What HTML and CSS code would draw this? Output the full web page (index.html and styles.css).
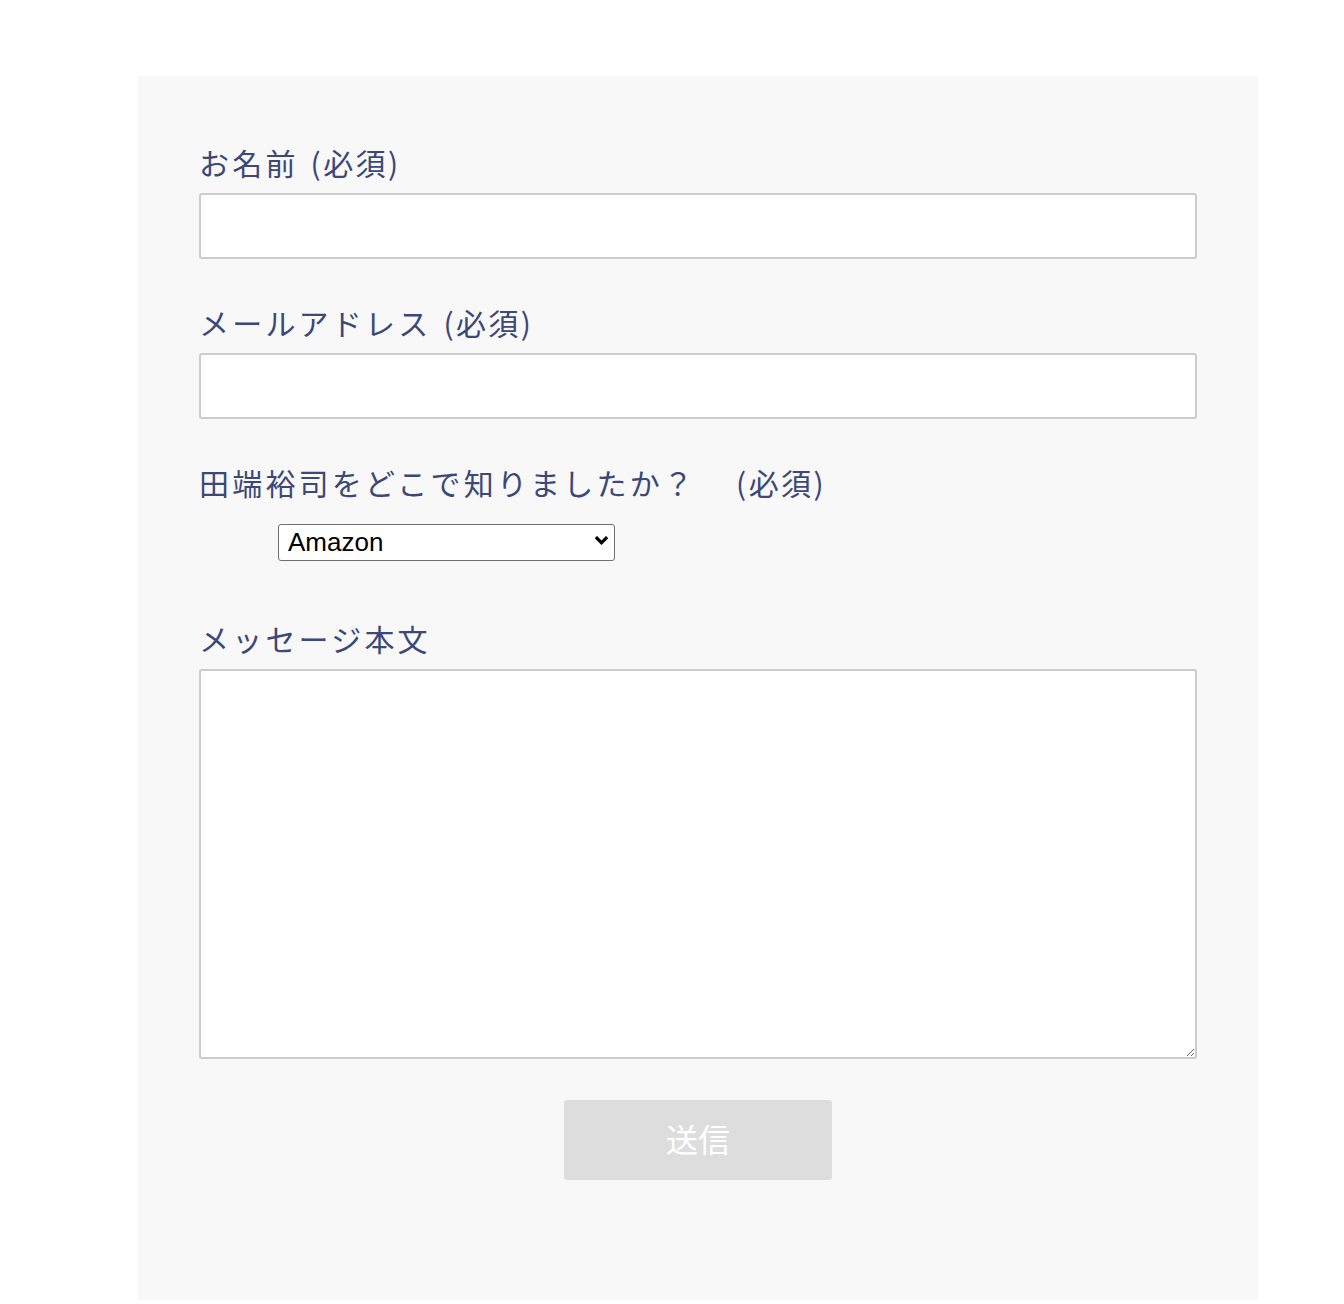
FILE: index.html
```html
<!DOCTYPE html>
<html lang="ja">
<head>
<meta charset="utf-8">
<title>お問い合わせ</title>
<link rel="stylesheet" href="styles.css">
</head>
<body>
<main class="page">
  <form class="contact">
    <div class="field">
      <label class="label" for="name">お名前<span class="req">(必須)</span></label>
      <input class="text-input" id="name" type="text">
    </div>
    <div class="field">
      <label class="label" for="email">メールアドレス<span class="req">(必須)</span></label>
      <input class="text-input" id="email" type="email">
    </div>
    <div class="field field-select">
      <label class="label" for="source">田端裕司をどこで知りましたか？<span class="req req-wide">(必須)</span></label>
      <div class="select-wrap">
        <select class="select" id="source">
          <option>Amazon</option>
          <option>書店</option>
          <option>SNS</option>
          <option>その他</option>
        </select>
        <svg class="chevron" width="13" height="11" viewBox="0 0 13 11" aria-hidden="true">
          <path d="M2 2.2 L6.5 6.8 L11 2.2" fill="none" stroke="#000" stroke-width="3.2" stroke-linecap="square" stroke-linejoin="miter"/>
        </svg>
      </div>
    </div>
    <div class="field field-last">
      <label class="label" for="message">メッセージ本文</label>
      <textarea class="textarea" id="message"></textarea>
    </div>
    <div class="actions">
      <button class="submit" type="button">送信</button>
    </div>
  </form>
</main>
</body>
</html>
```

FILE: styles.css
```css
html, body {
  margin: 0;
  padding: 0;
  background: #ffffff;
}

.page {
  padding: 76px 0 0 138px;
}

.contact {
  width: 1120px;
  box-sizing: border-box;
  background: #f8f8f8;
  padding: 71px 61px 120px 61px;
  font-family: "Noto Sans CJK JP", "Noto Sans", sans-serif;
}

.field {
  margin-bottom: 48px;
}

.field-select {
  margin-bottom: 62px;
}

.field-last {
  margin-bottom: 41px;
}

.label {
  display: block;
  font-size: 30px;
  line-height: 30px;
  letter-spacing: 3.2px;
  color: #3b4878;
  margin-bottom: 16px;
  white-space: nowrap;
}

.req {
  margin-left: 12px;
  letter-spacing: 2.4px;
}

.req-wide {
  margin-left: 40px;
}

.text-input {
  display: block;
  width: 100%;
  height: 66px;
  box-sizing: border-box;
  border: 2px solid #cccccc;
  border-radius: 3px;
  background: #ffffff;
  padding: 0 12px;
  font-size: 24px;
  font-family: inherit;
  outline: none;
  margin: 0;
}

.select-wrap {
  position: relative;
  width: 337px;
  height: 37px;
  margin: 27px 0 0 79px;
}

.select {
  appearance: none;
  -webkit-appearance: none;
  width: 100%;
  height: 100%;
  box-sizing: border-box;
  border: 1px solid #6f6f6f;
  border-radius: 3px;
  background: #ffffff;
  color: #000000;
  font-family: "Liberation Sans", Arial, sans-serif;
  font-size: 26px;
  line-height: 35px;
  padding: 0 30px 0 9px;
  margin: 0;
  outline: none;
}

.chevron {
  position: absolute;
  right: 7px;
  top: 12px;
  pointer-events: none;
}

.textarea {
  display: block;
  width: 100%;
  height: 390px;
  box-sizing: border-box;
  border: 2px solid #cccccc;
  border-radius: 3px;
  background: #ffffff;
  font-family: inherit;
  font-size: 24px;
  padding: 10px 12px;
  margin: 0;
  resize: both;
  outline: none;
}

.actions {
  display: flex;
  justify-content: center;
}

.submit {
  width: 268px;
  height: 80px;
  border: none;
  border-radius: 3px;
  background: #dddddd;
  color: #ffffff;
  font-family: "Noto Sans CJK JP", sans-serif;
  font-size: 32px;
  padding: 0 0 4px 0;
  cursor: pointer;
}
```
